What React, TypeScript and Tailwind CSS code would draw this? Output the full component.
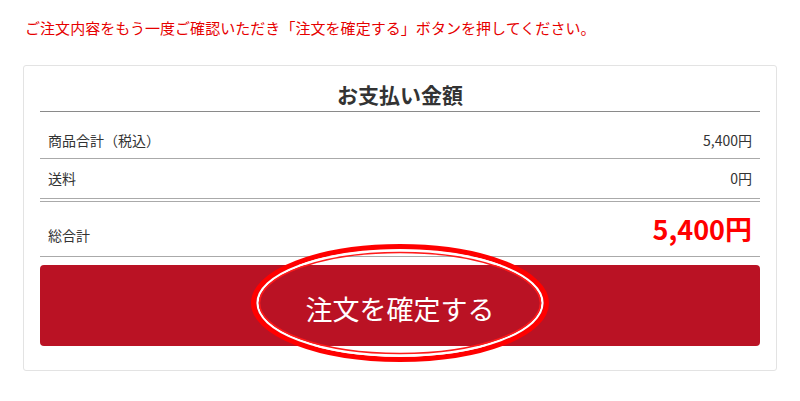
const font = {
  fontFamily: '"Noto Sans CJK JP", "Noto Sans", sans-serif',
};

function Ring() {
  return (
    <svg
      className="pointer-events-none absolute left-[211px] top-[-21px]"
      width="298"
      height="118"
      viewBox="0 0 298 118"
    >
      <ellipse cx="149" cy="59" rx="146.5" ry="56.5" fill="none" stroke="#ff0000" strokeWidth="5" />
      <ellipse cx="149" cy="59" rx="142.5" ry="52.5" fill="none" stroke="#ffffff" strokeWidth="2.2" />
      <ellipse cx="149" cy="59" rx="140.5" ry="50.5" fill="none" stroke="#ff1a1a" strokeWidth="1.5" />
    </svg>
  );
}

export default function App() {
  return (
    <div className="h-[401px] w-[800px] bg-white px-[23px] text-[#333]" style={font}>
      <p className="pl-[2px] pt-[18px] text-[15px] leading-[20px] tracking-[0.05px] text-[#e60000]">
        ご注文内容をもう一度ご確認いただき「注文を確定する」ボタンを押してください。
      </p>

      <div className="mt-[27px] rounded-[3px] border border-[#e3e3e3] px-[16px] pb-[24px]">
        <h2 className="border-b border-[#8a8a8a] pb-[3px] pt-[14px] text-center text-[21px] font-bold leading-[28px] text-[#333]">
          お支払い金額
        </h2>

        <div className="flex justify-between border-b border-[#aaa] px-[8px] pb-[8px] pt-[18px] text-[14px] leading-[20px]">
          <span>商品合計（税込）</span>
          <span>5,400円</span>
        </div>

        <div className="flex justify-between border-b-[4px] border-double border-[#aaa] px-[8px] pb-[10px] pt-[9px] text-[14px] leading-[20px]">
          <span>送料</span>
          <span>0円</span>
        </div>

        <div className="flex items-end justify-between border-b border-[#aaa] px-[8px] pb-[10px] pt-[10px]">
          <span className="pb-[1px] text-[14px] leading-[20px]">総合計</span>
          <span className="text-[27px] font-bold leading-[34px] text-[#ff0000]">5,400円</span>
        </div>

        <div className="relative mt-[8px]">
          <button
            type="button"
            className="flex h-[81px] w-full items-center justify-center rounded-[4px] bg-[#ba1224] pt-[6px] text-[27px] leading-[34px] text-white"
            style={font}
          >
            注文を確定する
          </button>
          <Ring />
        </div>
      </div>
    </div>
  );
}
